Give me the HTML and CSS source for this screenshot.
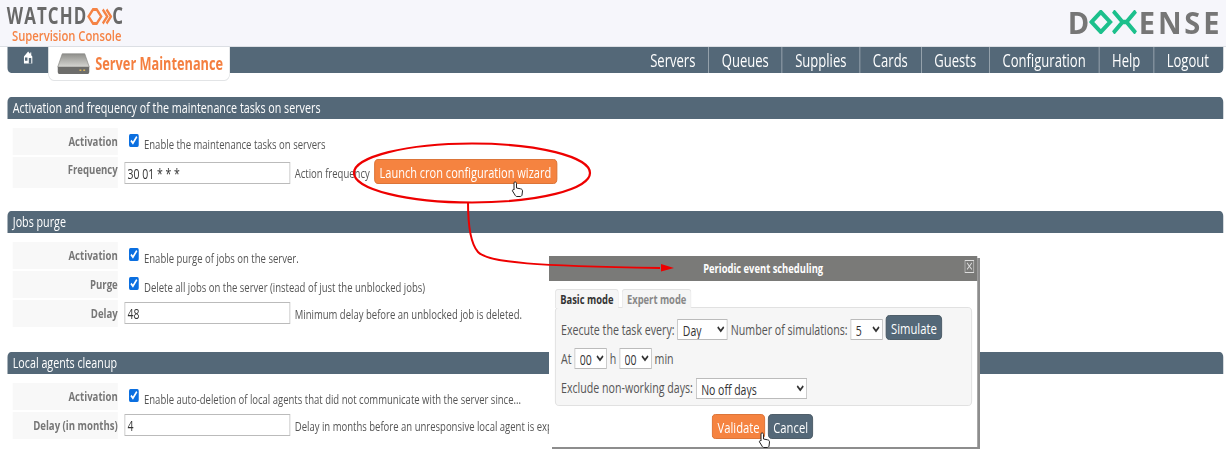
FILE: index.html
```html
<!DOCTYPE html>
<html lang="en">
<head>
<meta charset="utf-8">
<title>Server Maintenance</title>
<link rel="stylesheet" href="styles.css">
</head>
<body>
<div class="page">
<header class="top">
  <div class="brand">
    <div class="wd"><span>WATCHD</span><svg class="wd-mark" viewBox="0 0 34 17" width="34" height="17"><path d="M8 1.500 2 8.500l6 7h5l6-7-6-7z" fill="none" stroke="#f58345" stroke-width="2.800"/><path d="M21 1.500l6 7-6 7M26 1.500l6 7-6 7" fill="none" stroke="#f58345" stroke-width="2.800"/></svg><span>C</span></div>
    <div class="sup">Supervision Console</div>
  </div>
  <div class="dx"><span>D</span><svg class="dx-mark" viewBox="0 0 64 24" width="53" height="24" preserveAspectRatio="none"><path d="M15 2 3 12l12 10 12-10z" fill="none" stroke="#1cc08c" stroke-width="4.500"/><path d="M31 1l12 11-12 11M60 1 48 12l12 11M43 12h5" fill="none" stroke="#1cc08c" stroke-width="4.500"/></svg><span>ENSE</span></div>
</header>
<nav class="nav">
  <a class="home"><svg viewBox="0 0 14 14" width="15" height="13"><path d="M7 .5 1 6v7.500h12V6l-1.500-1.400V1.500H10v1.700z" fill="#fff"/><rect x="2.500" y="7" width="3.500" height="3.500" fill="#546878"/><rect x="8" y="7.500" width="3.500" height="6" fill="#546878"/></svg></a>
  <div class="tab">
    <svg class="srv" viewBox="0 0 44 21" width="44" height="21"><defs><linearGradient id="tray" x1="0" y1="0" x2="0" y2="1"><stop offset="0" stop-color="#8f8f8b"/><stop offset="1" stop-color="#d6d6d2"/></linearGradient></defs><path d="M7 .8h30L43 14H1z" fill="url(#tray)" stroke="#8a8a86" stroke-width=".8"/><path d="M1 14h42v5a2 2 0 0 1-2 2H3a2 2 0 0 1-2-2z" fill="#6d6d6b"/><rect x="30" y="16.500" width="2.500" height="1.500" fill="#d9b35a"/><rect x="35" y="16.500" width="2.500" height="1.500" fill="#d9b35a"/></svg>
    <span>Server Maintenance</span>
  </div>
  <ul class="menu">
    <li>Servers</li><li>Queues</li><li>Supplies</li><li>Cards</li><li>Guests</li><li>Configuration</li><li>Help</li><li>Logout</li>
  </ul>
</nav>
<main>
  <section class="sec sec1">
    <h2>Activation and frequency of the maintenance tasks on servers</h2>
    <div class="rows">
      <div class="row"><div class="lab">Activation</div><div class="val"><input type="checkbox" checked><span class="desc">Enable the maintenance tasks on servers</span></div></div>
      <div class="row freq"><div class="lab">Frequency</div><div class="val"><input class="txt" type="text" value="30 01 * * *"><span class="hint">Action frequency</span><button class="btn orange wizard">Launch cron configuration wizard</button></div></div>
    </div>
  </section>
  <section class="sec sec2">
    <h2>Jobs purge</h2>
    <div class="rows">
      <div class="row"><div class="lab">Activation</div><div class="val"><input type="checkbox" checked><span class="desc">Enable purge of jobs on the server.</span></div></div>
      <div class="row"><div class="lab">Purge</div><div class="val"><input type="checkbox" checked><span class="desc">Delete all jobs on the server (instead of just the unblocked jobs)</span></div></div>
      <div class="row"><div class="lab">Delay</div><div class="val"><input class="txt" type="text" value="48"><span class="hint">Minimum delay before an unblocked job is deleted.</span></div></div>
    </div>
  </section>
  <section class="sec sec3">
    <h2>Local agents cleanup</h2>
    <div class="rows">
      <div class="row"><div class="lab">Activation</div><div class="val"><input type="checkbox" checked><span class="desc">Enable auto-deletion of local agents that did not communicate with the server since...</span></div></div>
      <div class="row"><div class="lab">Delay (in months)</div><div class="val"><input class="txt" type="text" value="4"><span class="hint">Delay in months before an unresponsive local agent is expired.</span></div></div>
    </div>
  </section>
</main>

<div class="dialog">
  <div class="dlg-title"><span>Periodic event scheduling</span><i class="close">×</i></div>
  <div class="dlg-body">
    <div class="tabs"><span class="t active">Basic mode</span><span class="t">Expert mode</span></div>
    <div class="panel">
      <div class="line l1"><span>Execute the task every:</span>
        <select class="s-day"><option>Day</option></select><span>Number of simulations:</span>
        <select class="s-num"><option>5</option></select>
        <button class="btn slate sim">Simulate</button></div>
      <div class="line l2"><span>At</span><select class="s-t"><option>00</option></select><span>h</span><select class="s-t"><option>00</option></select><span>min</span></div>
      <div class="line l3"><span>Exclude non-working days:</span><select class="s-off"><option>No off days</option></select></div>
    </div>
    <div class="actions"><button class="btn orange act">Validate</button><button class="btn slate act">Cancel</button></div>
  </div>
</div>
</div>

<svg class="annot" viewBox="0 0 1227 457" width="1227" height="457">
  <ellipse cx="472" cy="173" rx="118" ry="29.500" fill="none" stroke="#ee0000" stroke-width="2.200"/>
  <path d="M468 202c0 18 1 40 10 50 10 11 60 14 182 16" fill="none" stroke="#ee0000" stroke-width="2"/>
  <path d="M661 264l13 4-13 3.500z" fill="#ee0000"/>
  <g class="hand" transform="translate(511 181)"><path d="M3 1.500c1-1 2.500-.5 2.500 1V7l4 .8c1.500.3 2 1 2 2.200l-.5 4c-.2 1-1 1.500-2 1.500H6c-1 0-1.500-.5-2-1.500L1.500 10c-.5-1 .8-2 1.500-1z" fill="#fff" stroke="#222" stroke-width="1"/></g>
  <g class="hand" transform="translate(758 432)"><path d="M3 1.500c1-1 2.500-.5 2.500 1V7l4 .8c1.500.3 2 1 2 2.200l-.5 4c-.2 1-1 1.500-2 1.500H6c-1 0-1.500-.5-2-1.500L1.500 10c-.5-1 .8-2 1.500-1z" fill="#fff" stroke="#222" stroke-width="1"/></g>
</svg>
</body>
</html>
```
FILE: styles.css
```css
* { box-sizing: border-box; }
html { overflow: hidden; }
html, body { margin: 0; padding: 0; }
body {
  width: 1227px; height: 457px; overflow: hidden; position: relative;
  background: #fff; color: #555;
  font-family: "Open Sans", sans-serif;
  font-size: 12.700px;
}
/* the reference is a horizontally squeezed capture: lay out wide, then squeeze */
.page {
  width: 1635px; height: 457px; position: relative;
  transform: scaleX(.75); transform-origin: 0 0;
}
.top {
  height: 47px; background: #f6f6fb; border-bottom: 1px solid #dcdfe4;
  display: flex; justify-content: space-between; padding: 7px 9px 0 9px;
}
.brand { line-height: 1; }
.wd { display: flex; align-items: center; height: 18px; font-size: 22.500px; font-weight: 700; color: #696969; letter-spacing: 1.500px; }
.wd-mark { margin: 0 0 0 -1px; }
.sup { font-size: 15px; color: #f58345; font-weight: 600; margin: 3px 0 0 7px; line-height: 15px; }
.dx {
  display: flex; align-items: center; height: 24px; margin-top: 3px; font-size: 31px; font-weight: 700;
  color: #767676; line-height: 24px; transform: scaleX(1.25); transform-origin: 100% 50%;
}
.dx span:last-child { letter-spacing: 3px; margin-right: -3px; }

.nav {
  height: 26px; margin: 0 4px 0 10px; background: #546878; color: #fff;
  border-radius: 0 0 5px 5px; display: flex; align-items: flex-start;
}
.home { width: 54px; height: 26px; display: flex; justify-content: center; padding-top: 4px; }
.tab {
  width: 243px; height: 34px; background: #fff; border: 1px solid #e2e4e6; border-top: 0;
  border-radius: 0 0 8px 8px; display: flex; align-items: center; gap: 7px; padding: 0 0 0 11px;
  color: #f47f40; font-weight: 700; font-size: 17px; white-space: nowrap;
}
.menu { list-style: none; margin: 0 2px 0 auto; padding: 0; display: flex; height: 26px; font-size: 17.400px; }
.menu li { padding: 0 17.100px; line-height: 26px; border-left: 1px solid #aab4bd; }
.menu li:first-child { border-left: 0; }

.sec { margin: 0 4px 0 10px; }
.sec1 { margin-top: 24px; height: 114px; }
.sec2 { height: 141px; }
.sec h2 {
  margin: 0; height: 22px; background: #546878; color: #fff; font-weight: 400; font-size: 14.300px;
  line-height: 22px; padding-left: 7px; border-radius: 5px 5px 0 0;
}
.rows { padding: 9px 0 0 7px; display: flex; flex-direction: column; gap: 2px; }
.row { display: flex; min-height: 27px; }
.row.freq { min-height: 31px; }
.lab {
  width: 140px; background: #f8f8f8; text-align: right; font-weight: 700; color: #777;
  padding: 4px 0 0 0; font-size: 12.800px; white-space: nowrap;
}
.freq .lab { padding-top: 3px; }
.val { display: flex; align-items: flex-start; padding: 3px 0 0 9px; }
.val input[type=checkbox] { width: 13px; height: 13px; margin: 3px 7px 0 6px; accent-color: #0b6fe0; flex: none; }
.desc { padding-top: 4px; white-space: nowrap; }
.hint { padding: 2px 0 0 6px; white-space: nowrap; }
.txt {
  width: 221px; height: 22px; border: 1px solid #bbb; padding: 0 3px; margin: -1px 0 0 0;
  font: 14px "Open Sans", sans-serif; color: #333; background: #fff; flex: none;
}
.freq .txt { margin-top: 2px; }
.freq .hint { padding-top: 4px; }
.btn {
  font-family: inherit; color: #fff; border-radius: 5px; cursor: pointer; padding: 0;
  font-size: 15px; white-space: nowrap;
}
.orange { background: #f58340; border: 1px solid #d86a2a; }
.slate { background: #546878; border: 1px solid #43535f; }
.wizard { width: 244px; height: 25px; margin: -1px 0 0 5.500px; flex: none; font-size: 14.700px; }

.dialog {
  position: absolute; left: 732px; top: 256px; width: 571px; height: 191px;
  background: #fff; box-shadow: 4px 2px 0 #8d8d8d; color: #555; font-size: 14.200px;
}
.dlg-title {
  height: 25px; background: #7a7a78; color: #fff; font-weight: 700; font-size: 12.500px;
  text-align: center; line-height: 25px; position: relative;
}
.close {
  position: absolute; right: 4px; top: 4px; width: 13px; height: 13px; border: 1px solid #ddd;
  font-style: normal; font-weight: 400; line-height: 10px; font-size: 16px; color: #ddd;
}
.dlg-body { padding: 8px 7px 0 8px; }
.tabs { display: flex; gap: 4px; height: 19px; position: relative; z-index: 1; }
.t {
  padding: 1px 6px 0; border: 1px solid #e2e2e2; border-bottom: 0; border-radius: 4px 4px 0 0;
  font-size: 12.500px; font-weight: 700; color: #888; background: #f5f5f5;
}
.t.active { color: #333; background: #f6f6f6; }
.panel {
  background: #f6f6f6; border: 1px solid #ddd; border-radius: 5px; height: 99px; margin-top: -1px;
  padding: 7px 7px 0;
}
.line { display: flex; align-items: center; gap: 4px; white-space: nowrap; }
.l1 { height: 25px; align-items: flex-end; }
.l1 span { margin-bottom: 1px; }
.l2 { height: 21px; margin-top: 8px; }
.l3 { height: 21px; margin-top: 9px; }
.l3 span { margin-bottom: 2px; }
select {
  font: 14px "Open Sans", sans-serif; color: #333; background: #fff;
  border: 1px solid #bbb; height: 21px; padding: 0 0 0 2px; margin: 0; flex: none;
}
.s-day { width: 67px; }
.s-num { width: 43px; }
.s-t { width: 43px; }
.s-off { width: 148px; }
.sim { width: 75px; height: 25px; }
.actions { display: flex; justify-content: center; gap: 4px; margin: 8px 0 0 0; padding-right: 2.500px; }
.act { height: 25px; }
.act.orange { width: 71px; }
.act.slate { width: 60px; }
.annot { position: absolute; left: 0; top: 0; pointer-events: none; }
```
